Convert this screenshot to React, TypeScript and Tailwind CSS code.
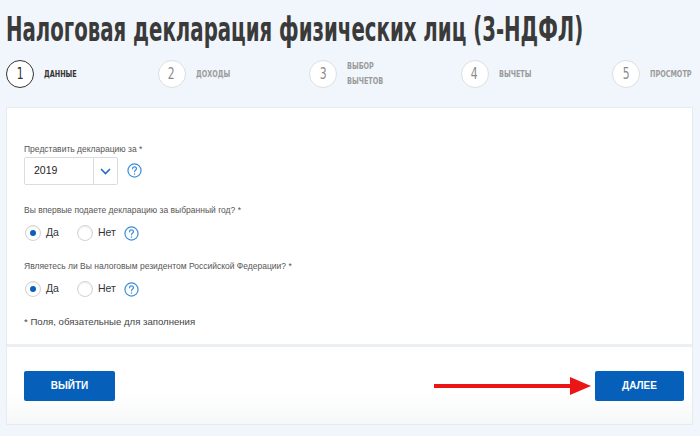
import React from 'react'

const COND = "font-['DejaVu_Sans_Condensed','DejaVu_Sans',sans-serif]"
const BODY = "font-['Liberation_Sans',Arial,sans-serif]"

const STEPS = [
  { n: 1, label: ['ДАННЫЕ'] },
  { n: 2, label: ['ДОХОДЫ'] },
  { n: 3, label: ['ВЫБОР', 'ВЫЧЕТОВ'] },
  { n: 4, label: ['ВЫЧЕТЫ'] },
  { n: 5, label: ['ПРОСМОТР'] },
]

function HelpIcon() {
  return (
    <svg width="15" height="15" viewBox="0 0 16 16" className="shrink-0">
      <circle cx="8" cy="8" r="7" fill="none" stroke="#3d8edb" strokeWidth="1.3" />
      <path
        d="M5.9 6.2a2.1 2.1 0 0 1 4.2 0c0 1.3-2.1 1.6-2.1 3"
        fill="none"
        stroke="#3d8edb"
        strokeWidth="1.3"
        strokeLinecap="round"
      />
      <circle cx="8" cy="11.6" r="0.8" fill="#3d8edb" />
    </svg>
  )
}

function Radio({ checked, label, className }: { checked?: boolean; label: string; className?: string }) {
  return (
    <div className={`flex items-center ${className ?? ''}`}>
      <span className="flex h-[16px] w-[16px] items-center justify-center rounded-full border border-[#cfd3d7] bg-white shadow-[inset_0_1px_2px_rgba(0,0,0,0.08)]">
        {checked && <span className="h-[6px] w-[6px] rounded-full bg-[#0b5fc1]" />}
      </span>
      <span className="ml-[5px] text-[10.5px] text-[#333]">{label}</span>
    </div>
  )
}

function RadioRow() {
  return (
    <div className="mt-[9px] flex items-center pl-[1px]">
      <Radio checked label="Да" />
      <Radio label="Нет" className="ml-[18px]" />
      <span className="ml-[8px]">
        <HelpIcon />
      </span>
    </div>
  )
}

export default function App() {
  return (
    <div className={`h-[436px] w-[700px] overflow-hidden bg-[#f0f6fb] ${BODY}`}>
      <div className="h-[50px] pl-[6px] pt-[10px]">
        <h1
          className={`inline-block origin-left scale-x-[0.665] whitespace-nowrap text-[33px] font-bold leading-[40px] text-[#3a3a3a] ${COND}`}
        >
          Налоговая декларация физических лиц (3-НДФЛ)
        </h1>
      </div>

      {/* Steps */}
      <div className={`mt-[8px] flex h-[32px] pl-[6px] ${COND}`}>
        {STEPS.map((s) => {
          const active = s.n === 1
          return (
            <div key={s.n} className="flex w-[151.5px] shrink-0 items-center">
              <span
                className={`flex h-[28px] w-[28px] shrink-0 items-center justify-center rounded-full bg-white text-[15px] ${
                  active ? 'border-[1.5px] border-[#333] text-[#333]' : 'border border-[#dcdfe2] text-[#8a8a8a]'
                }`}
              >
                <span className="inline-block scale-x-[0.8]">{s.n}</span>
              </span>
              <span
                className={`ml-[10px] inline-block origin-left scale-x-[0.8] whitespace-nowrap text-[9px] font-bold leading-[15px] ${
                  active ? 'text-[#333]' : 'text-[#9a9a9a]'
                }`}
              >
                {s.label.map((l) => (
                  <span key={l} className="block">
                    {l}
                  </span>
                ))}
              </span>
            </div>
          )
        })}
      </div>

      {/* Card */}
      <div className="ml-[6px] mt-[17px] w-[687px] border border-[#e6ebf0] bg-[#eceff2]">
        <div className="h-[236px] bg-white pl-[17px] pt-[35px]">
          <p className="text-[8.5px] leading-[12px] text-[#555]">Представить декларацию за *</p>
          <div className="mt-[2px] flex items-center">
            <div className="flex h-[28px] w-[94px] rounded-[2px] border border-[#d9dde1] bg-white">
              <span className="flex flex-1 items-center pl-[9px] text-[10.5px] text-[#222]">2019</span>
              <span className="flex w-[24px] items-center justify-center border-l border-[#d9dde1]">
                <svg width="11" height="7" viewBox="0 0 11 7">
                  <path d="M1 1l4.5 4.5L10 1" fill="none" stroke="#1d6fc4" strokeWidth="1.6" />
                </svg>
              </span>
            </div>
            <span className="ml-[9px] -mt-[2px]">
              <HelpIcon />
            </span>
          </div>

          <p className="mt-[19px] text-[8.5px] leading-[12px] text-[#555]">
            Вы впервые подаете декларацию за выбранный год? *
          </p>
          <RadioRow />

          <p className="mt-[19px] text-[8.5px] leading-[12px] text-[#555]">
            Являетесь ли Вы налоговым резидентом Российской Федерации? *
          </p>
          <RadioRow />

          <p className="mt-[18px] text-[9.6px] leading-[14px] text-[#444]">
            * Поля, обязательные для заполнения
          </p>
        </div>

        <div className="mt-[3px] flex h-[77px] items-center bg-gradient-to-b from-white from-60% to-[#f6f7f8] pl-[17px] pr-[8px]">
          <button className="h-[30px] w-[91px] rounded-[2px] bg-[#0660b9] text-[10px] font-bold text-white">
            ВЫЙТИ
          </button>
          <div className="ml-auto flex items-center">
            <svg width="158" height="20" viewBox="0 0 158 20" className="mr-[3px]">
              <rect x="0" y="8" width="138" height="4" fill="#ec1515" />
              <polygon points="136,1 157,10 136,19" fill="#ec1515" />
            </svg>
            <button className="h-[30px] w-[89px] rounded-[2px] bg-[#0660b9] text-[10px] font-bold text-white">
              ДАЛЕЕ
            </button>
          </div>
        </div>
      </div>
    </div>
  )
}
